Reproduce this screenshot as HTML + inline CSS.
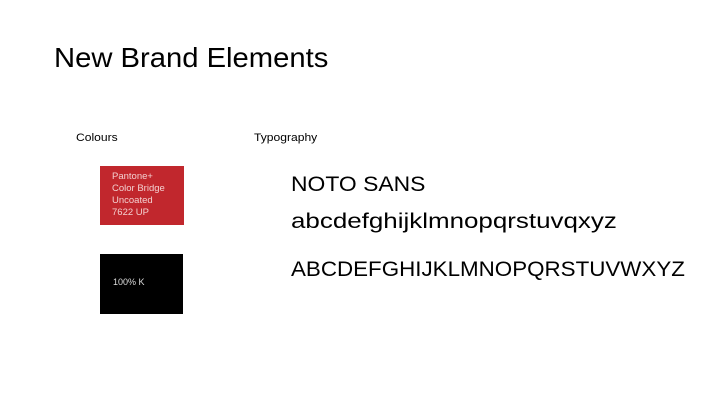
<!DOCTYPE html><html><head><style>
body{margin:0;width:720px;height:405px;background:#fff;position:relative;overflow:hidden;font-family:"Liberation Sans",sans-serif;color:#000}
div{position:absolute;white-space:nowrap;transform-origin:0 0}
</style></head><body>
<div style="left:54px;top:42px;font-size:28px;transform:scaleX(1.043)">New Brand Elements</div>
<div style="left:76px;top:132px;font-size:11px;transform:scaleX(1.1)">Colours</div>
<div style="left:254px;top:132px;font-size:11px;transform:scaleX(1.1)">Typography</div>
<div style="left:100px;top:166px;width:84px;height:59px;background:#c1272d;color:#f3d0d0;font-size:9.5px;line-height:12px;padding:5px 0 0 12px;box-sizing:border-box">Pantone+<br>Color Bridge<br>Uncoated<br>7622 UP</div>
<div style="left:100px;top:254px;width:83px;height:60px;background:#000;color:#ddd;font-size:9px;padding:23px 0 0 13px;box-sizing:border-box">100% K</div>
<div style="left:291px;top:173px;font-size:21px;transform:scaleX(1.09)">NOTO SANS</div>
<div style="left:291px;top:210px;font-size:21px;transform:scaleX(1.235)">abcdefghijklmnopqrstuvqxyz</div>
<div style="left:291px;top:258px;font-size:21px;transform:scaleX(1.065)">ABCDEFGHIJKLMNOPQRSTUVWXYZ</div>
</body></html>
